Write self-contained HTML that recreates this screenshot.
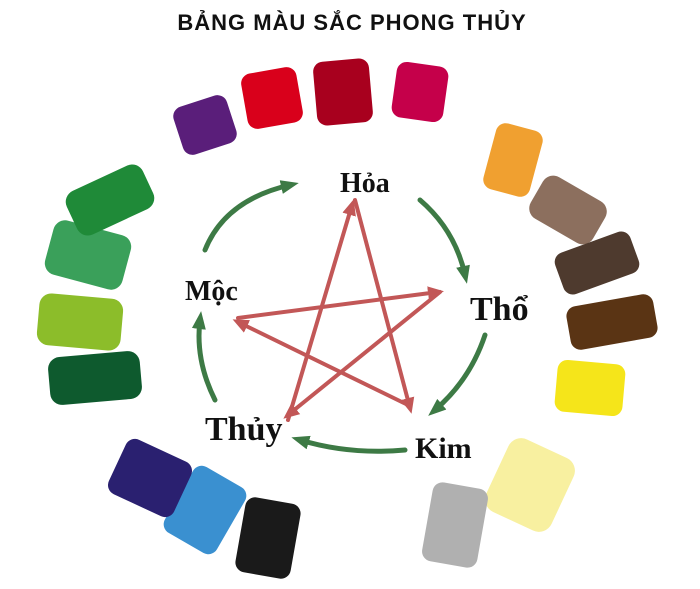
<!DOCTYPE html>
<html><head><meta charset="utf-8"><style>
html,body{margin:0;padding:0;background:#fff;}
svg{display:block}
.t{font-family:"Liberation Serif","DejaVu Serif",serif;font-weight:bold;fill:#111}
</style></head><body>
<svg width="700" height="589" viewBox="0 0 700 589" xmlns="http://www.w3.org/2000/svg">
<defs>
<marker id="ag" markerUnits="userSpaceOnUse" markerWidth="18" markerHeight="18" refX="9" refY="9" orient="auto"><path d="M0,2 L18,9 L0,16 z" fill="#3d7a45"/></marker>
<marker id="ar" markerUnits="userSpaceOnUse" markerWidth="16" markerHeight="16" refX="10" refY="8" orient="auto"><path d="M0,1 L16,8 L0,15 z" fill="#b83a3a"/></marker>
</defs>
<text x="352" y="30" text-anchor="middle" class="t" font-size="22" style="font-family:'Liberation Sans',sans-serif;font-weight:900;letter-spacing:1px">BẢNG MÀU SẮC PHONG THỦY</text>
<g>
<rect x="-28" y="-25" width="56" height="50" rx="10" fill="#5a1e7a" transform="translate(205,125) rotate(-18)"/>
<rect x="-28" y="-28" width="56" height="56" rx="10" fill="#d9001b" transform="translate(272,98) rotate(-10)"/>
<rect x="-28" y="-32" width="56" height="64" rx="10" fill="#a8001e" transform="translate(343,92) rotate(-5)"/>
<rect x="-26" y="-28" width="52" height="56" rx="10" fill="#c5004a" transform="translate(420,92) rotate(8)"/>
<rect x="-24" y="-34" width="48" height="68" rx="10" fill="#f0a030" transform="translate(513,160) rotate(15)"/>
<rect x="-36" y="-24" width="72" height="48" rx="12" fill="#8c6f5e" transform="translate(568,210) rotate(30)"/>
<rect x="-40" y="-22" width="80" height="44" rx="10" fill="#4e3a2e" transform="translate(597,263) rotate(-20)"/>
<rect x="-44" y="-22" width="88" height="44" rx="10" fill="#5a3414" transform="translate(612,322) rotate(-10)"/>
<rect x="-34" y="-26" width="68" height="52" rx="10" fill="#f5e51a" transform="translate(590,388) rotate(5)"/>
<rect x="-36" y="-40" width="72" height="80" rx="14" fill="#f8f0a0" transform="translate(530,485) rotate(25)"/>
<rect x="-28" y="-40" width="56" height="80" rx="10" fill="#b0b0b0" transform="translate(455,525) rotate(10)"/>
<rect x="-28" y="-38" width="56" height="76" rx="10" fill="#1a1a1a" transform="translate(268,538) rotate(10)"/>
<rect x="-30" y="-38" width="60" height="76" rx="10" fill="#3a90d0" transform="translate(205,510) rotate(30)"/>
<rect x="-36" y="-30" width="72" height="60" rx="10" fill="#2a2070" transform="translate(150,478) rotate(25)"/>
<rect x="-46" y="-24" width="92" height="48" rx="12" fill="#0e5a2e" transform="translate(95,378) rotate(-5)"/>
<rect x="-42" y="-26" width="84" height="52" rx="12" fill="#8cbd2a" transform="translate(80,322) rotate(5)"/>
<rect x="-40" y="-28" width="80" height="56" rx="12" fill="#3aa05a" transform="translate(88,255) rotate(15)"/>
<rect x="-42" y="-24" width="84" height="48" rx="12" fill="#1f8a38" transform="translate(110,200) rotate(-25)"/>
</g>
<g fill="none" stroke="#3d7a45" stroke-width="5" stroke-linecap="round" marker-end="url(#ag)">
<path d="M420,200 Q455,230 465,275"/>
<path d="M485,335 Q470,380 435,410"/>
<path d="M405,450 Q350,455 300,440"/>
<path d="M215,400 Q195,360 200,320"/>
<path d="M205,250 Q225,200 290,185"/>
</g>
<g stroke="#b83a3a" stroke-width="4" stroke-linecap="round" opacity="0.85" marker-end="url(#ar)">
<line x1="355" y1="200" x2="410" y2="408"/>
<line x1="408" y1="405" x2="238" y2="322"/>
<line x1="238" y1="318" x2="438" y2="292"/>
<line x1="440" y1="292" x2="288" y2="415"/>
<line x1="288" y1="420" x2="352" y2="205"/>
</g>
<text x="340" y="192" class="t" font-size="28">Hỏa</text>
<text x="470" y="320" class="t" font-size="34">Thổ</text>
<text x="415" y="458" class="t" font-size="30">Kim</text>
<text x="205" y="440" class="t" font-size="34">Thủy</text>
<text x="185" y="300" class="t" font-size="28">Mộc</text>
</svg>
</body></html>
